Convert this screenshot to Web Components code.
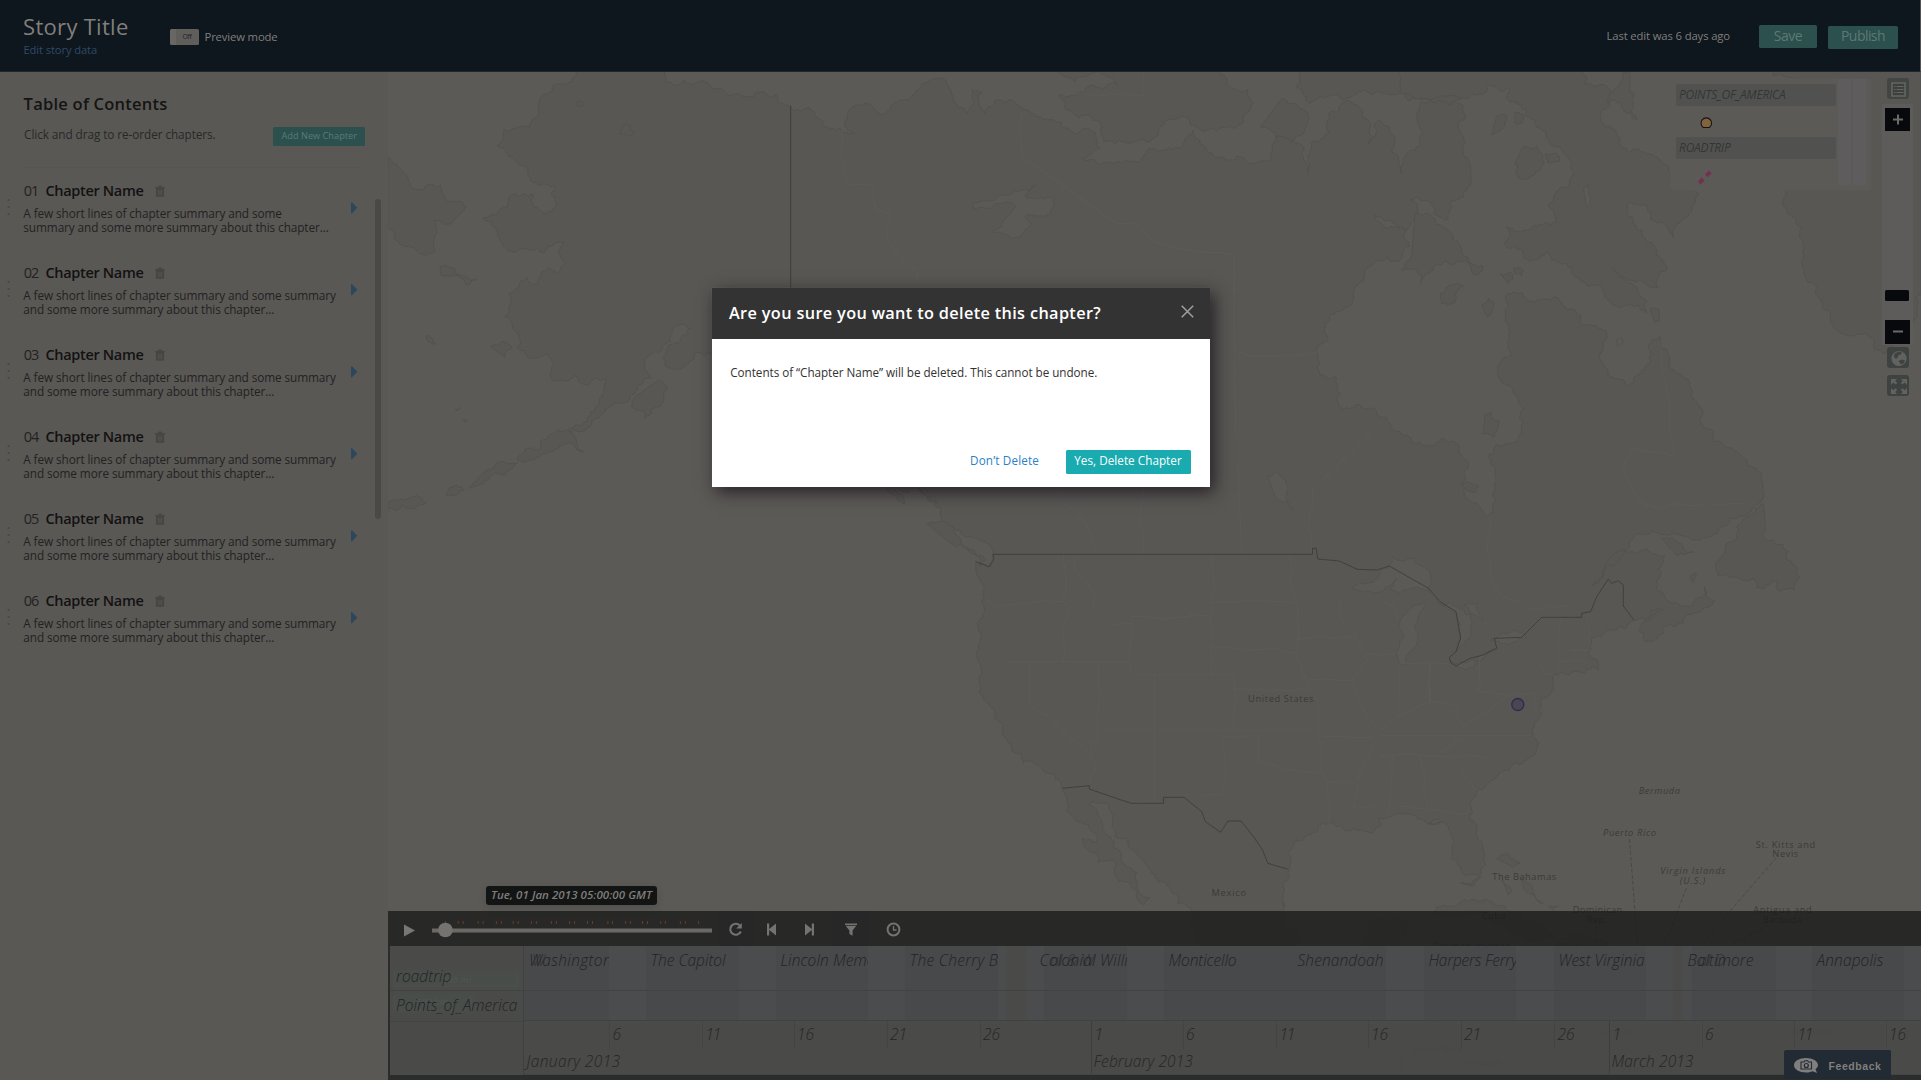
<!DOCTYPE html>
<html lang="en">
<head>
<meta charset="utf-8">
<title>Story Title</title>
<style>
html,body{margin:0;height:100%;overflow:hidden;background:#5a5855;font-family:"Open Sans","Noto Sans",sans-serif}
</style>
</head>
<body>
<story-editor></story-editor>
<script>
const define = (name, html, setup) => customElements.define(name, class extends HTMLElement {
  constructor() {
    super();
    this.attachShadow({mode: 'open'}).innerHTML = typeof html === 'function' ? html(this) : html;
  }
  connectedCallback() { if (setup) setup(this, this.shadowRoot); }
});

/* Basemap geometry: each sheet is [originX, originY, scaleX, scaleY] in page units. */
const SHEETS = {
  A: [380, 70, 2.8, 3], B: [900, 70, 2.8, 3], C: [1400, 70, 3, 2.8], D: [900, 460, 2.8, 3],
  E: [1380, 560, 3, 3], F: [1400, 780, 3, 3], G: [920, 900, 3, 3]
};
function points(text) {
  const out = []; let s;
  for (const tok of text.trim().split(/\s+/)) {
    if (SHEETS[tok]) { s = SHEETS[tok]; continue; }
    const [x, y] = tok.split(',').map(Number);
    out.push([s[0] + x / s[2], s[1] + y / s[3]]);
  }
  return out;
}
let seed = 7;
const rnd = () => (seed = (seed * 16807) % 2147483647) / 2147483647 - .5;
function rough(pts, amp) {
  const out = [];
  const split = (a, b) => {
    const dx = b[0] - a[0], dy = b[1] - a[1], d = Math.hypot(dx, dy);
    if (d < 3.2 || d > 90) { out.push(b); return; }
    const k = rnd() * amp, m = [(a[0] + b[0]) / 2 - dy * k, (a[1] + b[1]) / 2 + dx * k];
    split(a, m); split(m, b);
  };
  out.push(pts[0]);
  for (let i = 1; i < pts.length; i++) split(pts[i - 1], pts[i]);
  return out;
}
const path = (t, closed, amp) => 'M' + rough(points(t), amp).map(p => p[0].toFixed(1) + ' ' + p[1].toFixed(1)).join('L') + (closed ? 'Z' : '');

const LAND = [
`A 550,0 545,20 520,45 485,45 470,70 448,98 443,135 418,172 345,180 345,205 328,226 370,260 410,290 425,335 465,343 490,345 480,370 495,400 485,415 428,410 428,373 405,373 360,390 288,445 325,475 330,500 345,530 385,542 440,533 460,548 490,520 515,515 500,545 518,580 500,607 465,600 442,640 412,622 390,650 360,710 350,740 375,780 385,830 415,862 468,850 488,880 480,925 510,930 545,915 580,945 600,925 630,925 622,980 590,1025 530,1075 525,1090 560,1085 610,1045 665,1000 700,985 760,925 740,890 790,840 820,775 855,765 870,775 805,830 800,890 830,895 880,850 935,850 1300,1000 1420,1250 1450,1290 1470,1303 1465,1280 1440,1250 1520,1250 1540,1290 1560,1300
D 50,85 95,110 115,180 200,230 260,270 262,285 250,320 212,305 215,340 235,380 233,460 218,560 230,630 222,670 240,720 285,790 300,840 340,885 345,910 400,930 450,965 455,985 470,1030 500,1085 545,1120 550,1145 512,1135 520,1165 605,1210 612,1265 660,1290 683,1335 700,1315 665,1265 620,1185 590,1130 565,1105 530,1030 575,1030 600,1110 600,1130 660,1180 700,1230 760,1290 815,1350
G 820,35 825,100 840,137 1000,250 1300,300 1290,240 1150,160 1110,90 1090,30 1090,5
D 1075,1340 1073,1270 1092,1225 1085,1180 1110,1140 1175,1095 1210,1088 1270,1105 1330,1110 1345,1100 1340,1075 1380,1068 1440,1065 1490,1093 1515,1085
E 145,793 175,778 205,800 215,830 215,860 240,920 265,945 300,945 315,910 315,885 295,840 270,780 270,730 290,695 340,660 360,635 385,633 395,612 435,603 468,575 455,510 480,470 482,430 510,405 520,370 520,345 580,335 640,320 655,330 655,305 635,295 630,260 650,230 700,210 765,180 830,155 850,150 790,185 780,215 795,243 850,200 960,155 1005,125 975,80 940,130 870,125 845,95 830,60 840,30
C 770,1400 795,1360 740,1340 680,1350 610,1400 575,1445 620,1385 690,1330 700,1310 750,1298 935,1305 990,1255 1045,1245 1085,1205 1085,1140 1045,1110 1040,1090 940,1040 900,985 880,920 830,850 778,745 750,820 725,850 685,885 650,865 612,830 610,770 620,735 550,715 520,670 465,635 410,645 320,628 315,680 328,720 325,770 335,800 295,860 340,890 370,950 365,1005 330,1045 262,1080 285,1130 285,1210 260,1250 215,1210 180,1160 178,1055 80,1050 0,1012
B 1345,1040 1290,1008 1240,1022 1220,920 1175,915 1168,850 1190,760 1270,665 1300,620 1330,575 1400,570 1418,480 1380,472 1325,430 1395,470 1420,480 1450,405
C 30,360 75,365 145,420 150,370 212,320 210,260 188,220 190,100 65,88 70,180 5,290
B 1375,240 1370,170 1340,150 1330,200 1310,225 1310,150 1240,100 1200,130 1200,190 1140,260 1140,310 1130,230 1090,210 1050,200 1040,270 930,270 860,245 820,180 740,240 700,235 620,280 510,265 560,235 545,185 460,175 400,150 345,120 320,95 265,95 240,135 230,65 200,60 190,130 150,90 110,25 50,60 0,90
A 1400,130 1360,100 1310,125 1300,160 1330,190 1290,178 1240,155 1210,120 1150,108 1110,75 1070,65 1020,78 950,55 850,30 800,38 790,0`,
`B 430,0 460,20 520,20 540,8 600,30 610,45 540,45 445,75 465,120 500,145 560,155 570,215 630,215 700,215 790,135 850,185 940,175 970,130 975,60 910,20 890,0`,
`B 1070,85 1130,120 1140,170 1100,215 1010,170`,
`B 1120,0 1110,50 1150,100 1240,90 1300,60 1400,70 1460,90 1568,90 1568,0`,
`C 545,0 555,40 620,45 610,110 660,190 740,235 800,265 850,330 895,345 860,410 820,470 750,420 740,380 690,370 700,430 740,480 770,520 800,560 775,610 700,590 640,555 740,650 740,680 620,640 540,590 480,540 440,510 370,520 315,490 320,440 400,435 470,425 445,380 500,330 515,300 490,230 440,190 380,130 330,90 325,50 270,40 200,80 100,80 0,60 0,0`,
`C 690,0 660,40 620,90 690,120 711,140 700,90 690,60`,
`C 1120,0 1120,15 1180,25 1155,340 1150,380 1200,470 1205,530 1245,600 1290,680 1345,745 1410,750 1455,795 1500,760 1540,700 1545,640 1563,610 1563,0`,
`C 1090,1215 1050,1250 1010,1310 955,1415 1060,1420 1070,1450 1130,1430 1140,1460 1185,1455 1188,1390 1160,1370 1150,1330 1090,1310 1095,1260`,
`C 370,215 410,212 425,235 420,280 390,302 355,300 345,260`,
`C 435,235 470,232 480,255 445,260`, `C 345,120 370,125 365,150 345,148`, `C 290,130 315,125 300,170 275,180`,
`C 45,400 95,410 150,455 205,525 250,550 225,572 135,535 100,560 60,598 50,560 5,560 35,520`,
`C 120,625 150,600 190,605 170,640 125,655`, `C 245,660 265,640 280,660 262,692`, `C 300,570 330,565 340,585 325,597`,
`C 340,555 370,562 365,578 345,570`, `C 785,1310 830,1320 880,1350 860,1355 810,1340`, `C 750,670 775,670 780,700 765,708`,
`C 255,965 275,960 300,985 280,1030 250,1020`, `C 870,1420 890,1410 880,1435`, `C 187,1160 210,1155 235,1165 225,1182 200,1178`,
`A 22,260 60,300 80,330 170,345 240,410 190,462 150,450 160,490 155,540 130,557 105,545 50,515 22,465`,
`A 168,590 210,595 270,625 240,645 200,618 170,615`, `A 310,830 340,815 370,835 350,862`,
`A 780,930 805,955 790,1000 740,1045 710,1015 715,980`,
`A 385,1170 400,1150 470,1100 520,1080 570,1145 540,1120 500,1135 440,1160 400,1175`,
`A 250,1255 280,1220 385,1180 350,1215 290,1240`, `A 22,1305 90,1280 130,1298 60,1305 22,1318`, `A 185,1275 230,1250 235,1262 190,1278`,
`A 128,798 155,822 135,815`, `A 210,1018 225,1013 215,1022`, `A 232,1050 245,1050 238,1056`,
`D 75,190 115,185 170,240 240,300 225,318 130,240`,
`F 100,400 130,375 220,358 290,375 380,430 460,468 380,475 320,440 250,400 130,410`,
`F 470,490 560,470 630,490 640,530 480,525`, `F 290,235 320,220 360,250 340,262`, `F 305,290 335,330 325,345`, `F 360,290 400,330 430,370 405,345 370,320`,
`F 445,380 475,378 460,390`, `F 180,310 245,290 220,318`,
`G 1330,137 1350,65 1420,55 1465,60 1460,100 1430,200 1325,250`,
`A 680,165 700,165 712,187 700,198 670,190`, `A 550,95 565,95 568,107 552,108`,
`F 0,820 180,860 230,850 360,870 500,840 560,860 700,900 0,900`
];
const WATER = [
`B 205,400 300,375 380,345 350,380 430,385 420,430 350,440 370,465 320,505 260,485 300,440 325,410 270,400 205,415`,
`D 1030,50 1050,35 1080,60 1080,110 1100,150 1050,110`,
`D 1265,385 1370,320 1380,290 1480,330 1490,370 1480,395 1400,400 1370,390 1390,355 1300,395`,
`D 1440,435 1470,430 1440,500 1437,570 1410,615 1390,580 1400,480`,
`E 170,125 215,130 310,180 290,130 250,135 270,200 240,262 228,275 240,230 225,160`,
`E 208,300 228,312 340,265 350,270 310,295 240,325`,
`E 330,240 370,220 430,222 440,235 360,245`,
`C 550,330 565,320 570,370 560,385`, `C 650,755 665,750 668,765 652,775`
];
const BORDERS = [
`D 212,305 250,320 262,300 260,283 1155,283 1155,265 1165,265 1170,297 1230,303 1280,328 1335,330 1370,318 1480,385 E 145,85 180,125 228,155 242,235 228,275 208,292 212,308 228,318 270,295 310,285 350,265 343,235 425,232 485,172 605,172 605,160 632,155 650,110 685,57 695,70 715,62 730,75 730,138 762,180`,
`D 455,985 530,977 530,987 647,1030 738,1030 738,1012 795,1012 845,1055 855,1085 898,1117 918,1083 955,1083 990,1130 1015,1170 1030,1210 1085,1227`,
`A 1150,108 1150,780`
];
const STATES = [
`D 458,283 458,425 270,445 240,415`, `D 458,425 475,440 455,500 458,605`, `D 300,605 645,605`, `D 362,605 362,735 535,890 550,915 530,975`,
`D 553,605 553,840 535,850 535,890`, `D 648,470 648,645 935,645 935,810`, `D 648,470 872,470 872,283`, `D 872,430 1105,430`, `D 872,470 872,645`,
`D 872,560 1050,565 1110,580 1145,690 1170,720`, `D 935,688 1150,688`, `D 712,645 712,1030`, `D 560,810 1170,810`, `D 903,828 903,1003 790,1003`,
`D 903,828 1002,828 1002,905 1080,930 1190,945 1205,1040 1200,1090`, `D 1090,283 1112,440 1112,580`, `D 1112,538 1280,538`, `D 1140,660 1265,662 1310,600 1280,535 1230,470 1230,420`,
`D 1170,720 1172,830 1180,935`, `D 1172,828 1320,828 1330,850 1285,940 1270,1040 1330,1040`, `D 1192,965 1280,965`, `D 1265,662 1310,770 1345,810 1385,775 1485,725 1560,740`,
`D 1395,612 1395,775`, `D 1485,612 1485,725`, `D 1300,580 1390,580`, `D 1300,395 1385,440 1395,480`, `D 488,283 490,330 545,400 540,440 590,495 645,490`,
`D 440,100 530,210 550,283`, `D 682,60 682,283`, `D 945,0 957,283`, `D 1155,283 1155,90 1345,-110`,
`E 0,527 455,527`, `E 0,590 200,590 270,585 330,600 365,635`, `E 38,590 25,765`, `E 122,590 145,750 55,740`, `E 145,750 265,760 265,740`, `E 200,590 285,690`,
`E 60,312 205,312`, `E 150,312 150,430`, `E 298,290 298,397 460,397 465,450 485,450`, `E 298,380 225,455 250,500 330,450 380,410`, `E 170,585 260,527`,
`E 480,305 490,340 520,345`, `E 545,172 535,335`, `E 570,270 630,270`, `E 535,302 620,302`, `E 620,165 630,260`,
`C 272,1250 272,1430 310,1475 400,1510 500,1500`, `C 778,760 810,920 820,1080 700,1060 670,1110 720,1210 790,1230 820,1215 1035,1215`,
`B 342,120 342,260 605,460 660,460 705,512 935,555 940,1100`, `B 682,0 682,78 460,78`, `B 935,845 1168,845`, `A 1295,180 1305,340 1380,345 1390,420 1430,430 1420,510 1500,600 1510,640`
];
const LABELS = [
['United States',1248,701.7,65.5],['Mexico',1211.5,895.5,34.5],['Bermuda',1638.7,794,41.3,1],['Puerto Rico',1603,835.7,53,1],
['St. Kitts and',1755.7,847.7,59.6],['Nevis',1772.3,856.6,26],['Virgin Islands',1660.3,874,65,1],['(U.S.)',1679.7,884,25.6,1],
['The Bahamas',1492.3,880,64],['Dominican',1572.7,913.3,49.6],['Rep.',1587,923,20],['Cuba',1481.7,918.7,24],['Antigua and',1753.3,913.3,58.4],
['Barbuda',1762.7,923,39],['Cayman Islands',1433,948.5,76,1],['Haiti',1560,950,22.7],['Belize',1372,972,28],['Guatemala',1340.7,990,52],
['Honduras',1386,998.5,40],['El Salvador',1356.7,1010,55],['Nicaragua',1403,1020.7,48.7],['Costa Rica',1412.7,1051.7,49],['Panama',1462.7,1065,37.3],
['Aruba',1584.3,1018,26.7,1],['Curaçao',1595,1035,39],['St. Vincent',1604,987,53],['and the Grenadines',1583,996.7,94],['Dominica',1754,965,43.7],
['St. Lucia',1814,985.7,40],['Barbados',1868,1015.7,44],['Grenada',1792,1035,40],['Jamaica',1500,961.5,34],['Venezuela',1620.7,1072,52]
];

define('base-map', () => `<style>:host{display:block;width:1533px;height:1008px}svg{display:block}
text{font:500 9.3px "Open Sans",sans-serif;fill:#3b3a38}text.i{font-style:italic}</style>
<svg width="1533" height="1008" viewBox="388 72 1533 1008">
<rect x="388" y="72" width="1533" height="1008" fill="#5c5a57"/>
<g fill="#595754" stroke="#51504d" stroke-width=".8" stroke-linejoin="round">${LAND.map(t => `<path d="${path(t, true, .5)}"/>`).join('')}</g>
<g fill="#5c5a57" stroke="#52504e" stroke-width=".7">${WATER.map(t => `<path d="${path(t, true, .4)}"/>`).join('')}</g>
<g fill="none" stroke="#5e5c5a" stroke-width=".8">${STATES.map(t => `<path d="${path(t, false, .12)}"/>`).join('')}</g>
<g fill="none" stroke="#3d3c3a" stroke-width=".9">${BORDERS.map(t => `<path d="${path(t, false, 0)}"/>`).join('')}</g>
<g fill="none" stroke="#454442" stroke-width=".8" stroke-dasharray="4 2">
<path d="M1629.5 839L1637.5 946"/><path d="M1686.5 888L1664 946"/><path d="M1776 858L1700 946"/><path d="M1768 925L1730 946"/><path d="M1596.5 926V944"/></g>
${LABELS.map(l => `<text x="${l[1]}" y="${l[2]}" textLength="${l[3]}"${l[4] ? ' class="i"' : ''}>${l[0]}</text>`).join('')}
<circle cx="1517.8" cy="704.5" r="6" fill="#4c4653" stroke="#2b3050" stroke-width="1.4"/>
</svg>`);

define('app-button', `<style>:host{display:flex;align-items:center;justify-content:center;box-sizing:border-box;border-radius:1.5px;background:#2b504d;color:#5d7975}</style><slot></slot>`);

define('app-header', `<style>
:host{display:flex;height:72px;box-sizing:border-box;background:#0e161e;border-bottom:1px solid #20282f;color:#817f7b;border-right:1px solid #55534f}
.brand{width:147px;padding:13px 0 0 22.5px}
.title{font-size:22px;line-height:26px;padding-left:.6px}
.edit{font-size:11.2px;line-height:14px;margin-top:4px;color:#2e4b65;font-weight:500;padding-left:1px}
.toggle{width:29px;height:16px;margin:29px 6px 0 0;border-radius:1.5px;background:linear-gradient(90deg,#696764 6px,#5f5e5b 0);color:#242424;display:flex;justify-content:flex-end;box-sizing:border-box;padding-right:7px;font-size:7px;line-height:16px}
.mode{font-size:11.3px;line-height:14px;padding-top:29.5px}
.actions{margin-left:auto;display:flex;font-size:14px}
.last{font-size:11.3px;line-height:14px;padding:28.5px 29px 0 0}
app-button{height:23px;line-height:20px}
.save{width:58px;margin:25px 11px 0 0;padding-bottom:1px}.pub{width:70px;margin:26px 22px 0 0;padding-bottom:3px}
</style>
<div class="brand"><fit-text class="title" w="105.5">Story Title</fit-text><fit-text class="edit" w="73.5">Edit story data</fit-text></div>
<div class="toggle"><fit-text w="9">Off</fit-text></div><fit-text class="mode" w="73">Preview mode</fit-text>
<div class="actions"><fit-text class="last" w="123.5">Last edit was 6 days ago</fit-text>
<app-button class="save"><fit-text w="28.5">Save</fit-text></app-button><app-button class="pub"><fit-text w="44">Publish</fit-text></app-button></div>`);

define('chapter-item', el => `<style>
:host{display:block;height:82px;position:relative}
.top{display:flex;font-size:14.5px;line-height:20px;color:#161616}
.n{width:21.7px;padding-left:.5px;color:#222}.name{width:109.5px;font-weight:600;color:#121212}
.trash{margin-top:4px}
.body{display:flex;margin-top:5px;color:#222;font-size:11.8px;line-height:14px}
.txt{width:327.5px}
.arrow{margin-top:-4px}
.dots{position:absolute;left:-16px;top:17px}
</style>
<svg class="dots" width="4" height="18"><g fill="#484745"><circle cx="1.6" cy="2" r="1.1"/><circle cx="1.6" cy="9" r="1.1"/><circle cx="1.6" cy="16" r="1.1"/></g></svg>
<div class="top"><fit-text class="n" w="14.5">${el.getAttribute('no')}</fit-text><fit-text class="name" w="98"><slot></slot></fit-text>
<svg class="trash" width="10" height="12" viewBox="0 0 10 12"><path d="M0 2h2.6L3.8.4h2.4L7.4 2H10v1.3H0zM.9 3.3h8.2V11q0 .8-.8.8H1.7q-.8 0-.8-.8z" fill="#474644"/><path d="M3.4 5v5M5 5v5M6.6 5v5" stroke="#5a5855" stroke-width=".7"/></svg></div>
<div class="body"><div class="txt">${el.hasAttribute('first')
 ? '<fit-text w="258.5">A few short lines of chapter summary and some</fit-text><fit-text w="305.5">summary and some more summary about this chapter...</fit-text>'
 : '<fit-text w="312.5">A few short lines of chapter summary and some summary</fit-text><fit-text w="251">and some more summary about this chapter...</fit-text>'}</div>
<svg class="arrow" width="7" height="12"><path d="M0 .3L1 .3 6.3 5.8 1 11.3H0z" fill="#2c465c"/></svg></div>`);

define('table-of-contents', `<style>
:host{display:flex;width:388px;box-sizing:border-box;background:#5a5855;padding-left:23.3px}
.col{width:351.7px}
h1{margin:0;padding-top:19px;padding-left:.3px;font-size:16.5px;line-height:26px;font-weight:600;color:#141414}
.row{display:flex;justify-content:space-between;width:342.2px;height:21px;margin-top:10px;color:#282828;font-size:11.8px;line-height:22px;padding-left:.8px;box-sizing:border-box}
app-button{width:92.5px;height:18.5px;font-size:9.2px;color:#577d78;line-height:16px}
.row fit-text.hint{margin-top:-4px}
.list{margin-top:19px;border-top:1px solid #575552;width:338px;padding-top:13.4px}
.bar{width:6px;height:320px;margin-top:127px;border-radius:3px;background:#4a4947}
</style>
<div class="col"><h1><fit-text w="144">Table of Contents</fit-text></h1>
<div class="row"><fit-text class="hint" w="191.5">Click and drag to re-order chapters.</fit-text><app-button><fit-text w="75.5">Add New Chapter</fit-text></app-button></div>
<div class="list">
<chapter-item no="01" first>Chapter Name</chapter-item><chapter-item no="02">Chapter Name</chapter-item><chapter-item no="03">Chapter Name</chapter-item>
<chapter-item no="04">Chapter Name</chapter-item><chapter-item no="05">Chapter Name</chapter-item><chapter-item no="06">Chapter Name</chapter-item></div></div>
<div class="bar"></div>`);

define('map-legend', `<style>
:host{display:flex;width:200px;height:111px;background:#5c5a57;border-radius:3px;box-shadow:0 0 2px #5f5d5a;box-sizing:border-box;padding-left:5px}
.l{width:160px;padding-top:5px;font-size:12px;font-style:italic;color:#343634;margin-right:2px}
.h{height:22px;background:#51524f;border-radius:2px;line-height:21px;padding-left:3px;box-sizing:border-box}
svg{display:block}
.c{height:106px;background:#5e5c5c;margin-right:1.5px}
</style><div class="l"><div class="h"><fit-text w="106.5">POINTS_OF_AMERICA</fit-text></div>
<svg width="160" height="31"><path d="M27.3 21.5a5.3 5.3 0 1 1 6 0z" fill="#83633d" stroke="#151413" stroke-width="1.1"/></svg>
<div class="h"><fit-text w="51.5">ROADTRIP</fit-text></div>
<svg width="160" height="30"><path d="M23.2 24l4-4M30.3 16.8l4-4" stroke="#74304e" stroke-width="4"/></svg></div>
<div class="c" style="width:13px"></div><div class="c" style="width:13px"></div>`);

define('map-controls', `<style>
:host{display:flex;flex-direction:column;align-items:center;width:31px}
svg{display:block}
.strip{display:flex;flex-direction:column;width:31px;height:241px;background:#5e5c5a;margin:5px 0 2px;box-sizing:border-box;padding:4px 3px 0}
.gap{flex:none}
</style>
<svg width="22" height="21"><rect width="22" height="21" rx="3" fill="#414543"/><path d="M5 5h13v13H5z" fill="#3c403e" stroke="#656662" stroke-width="1.6"/><path d="M7 8.5h1.5M9.5 8.5h7M7 11.5h1.5M9.5 11.5h7M7 14.5h1.5M9.5 14.5h7" stroke="#656662" stroke-width="1"/></svg>
<div class="strip">
<svg width="25" height="23"><rect width="25" height="23" fill="#08090d"/><path d="M8 11.5h10M13 6.5v10" stroke="#6b6a69" stroke-width="2"/></svg>
<svg class="gap" width="24" height="11" style="margin-top:159px"><rect width="24" height="11" rx="1.5" fill="#08090d"/></svg>
<svg class="gap" width="25" height="24" style="margin-top:19px"><rect width="25" height="24" fill="#08090d"/><path d="M8 11.5h10" stroke="#6b6a69" stroke-width="2"/></svg></div>
<svg width="22" height="21"><rect width="22" height="21" rx="3" fill="#3e4341"/><circle cx="12" cy="11.5" r="7.6" fill="#62635f"/><path d="M7.5 6.5l4.5-2 3 1-1 2-2.5.5-.5 2-2 2-2-2zM11.5 14l3.5-1.5 3 1-1.5 3-2.5 1z" fill="#3e4341"/></svg>
<svg width="22" height="21" style="margin-top:7px"><rect width="22" height="21" rx="3" fill="#3e4341"/><path d="M4 4h6L8.2 5.8l2 2.2-1.6 1.5-2.2-2L4 10zM20 4v6l-2.4-2.5-2.2 2L13.8 8l2-2.2L14 4zM4 19v-6l2.4 2.3 2.2-2 1.6 1.5-2 2.2L10 19zM20 19h-6l1.8-2-2-2.2 1.6-1.5 2.2 2L20 13z" fill="#62635f"/></svg>`);

define('time-player', () => {
  const t = [219,233,275,289,326,340,373,387,424,438,480,494,531,545,581,595,638,651,688,701,735,749,786,799,841,855,892];
  return `<style>
:host{display:flex;height:35px;background:rgba(21,23,22,.73);color:#747370;padding-left:16px;align-items:center}
svg{display:block}.btn{display:flex;justify-content:center;align-items:center;width:37px;height:35px;box-sizing:border-box;padding-top:2px}
.on{background:rgba(34,37,36,.35)}</style>
<svg width="12" height="13" style="margin-top:3px"><path d="M0 .5L11 6.5 0 12.5z" fill="#787774"/></svg>
<svg width="286" height="35" style="margin:0 4px 0 11px"><rect x="5" y="17.5" width="280" height="4.5" fill="#6a6966"/><path d="M5 21.5h280" stroke="#4a4a47" />
<g stroke="#6e3b22">${t.map(v => `<path d="M${(v / 2.8 - 47).toFixed(1)} 10v3"/>`).join('')}<path d="M18.4 10v2"/></g><circle cx="18.4" cy="19" r="7.3" fill="#747370"/></svg>
<div class="btn on" style="width:37px"><svg width="15" height="15"><path d="M11.8 3.5A5.5 5.5 0 1 0 12.8 9.5" fill="none" stroke="#747370" stroke-width="2.1"/><path d="M13.8 1v5.6H8.2z" fill="#747370"/></svg></div>
<div class="btn" style="width:34px"><svg width="9" height="13"><path d="M0 .5h2.2V6L9 .5v12L2.2 7v5.5H0z" fill="#747370"/></svg></div>
<div class="btn" style="width:42px"><svg width="9" height="13"><path d="M9 .5H6.8V6L0 .5v12L6.8 7v5.5H9z" fill="#747370"/></svg></div>
<div class="btn on" style="margin-left:2px"><svg width="12" height="13"><path d="M0 .5h12v1.6H0zM.6 2.7h10.8L7.6 7.5v5.3L4.4 11V7.5z" fill="#747370"/></svg></div>
<div class="btn" style="margin-left:5.5px"><svg width="15" height="15"><circle cx="7.5" cy="7.5" r="5.9" fill="none" stroke="#747370" stroke-width="2"/><path d="M7.5 4v4h3" fill="none" stroke="#747370" stroke-width="1.3"/></svg></div>`;
});

define('story-timeline', () => {
  /* [width, trailing gap width, label, fitted width, head tint px, overprinted text] */
  const ev = [
    [85,36.5,'Washington',83,0,'W'],[93,37,'The Capitol',75,0],[92.5,36.5,'Lincoln Memorial',117,0],[93,37,'The Cherry Blossoms',145,0],
    [92,37,'Colonial Williamsburg',150,9,'al & W'],[129,0,'Monticello',68,0],[93,38,'Shenandoah',86,0],[92,38,'Harpers Ferry',89,0],[92,37,'West Virginia',86,0],
    [93,36,'Baltimore',66,9,'al D'],[92,18,'Annapolis',67,0]];
  const days = [[85,'1',-5],[93,'6'],[91.5,'11'],[93,'16'],[93,'21'],[111.5,'26'],[91.5,'1'],[93.5,'6'],[91.5,'11'],[93,'16'],[93.5,'21'],[55,'26'],[92.5,'1'],[92.5,'6'],[91.5,'11'],[36,'16']];
  const fw = s => s === '11' ? 14.5 : s.length > 1 ? 17 : s === '1' ? 6 : 8;
  const light = '#4a4c4e';
  const shade = i => i === 3 ? `linear-gradient(90deg,${light} 8px,transparent 8px 29px,${light} 0)` : i === 8 ? `linear-gradient(90deg,${light} 27px,transparent 0)` : light;
  return `<style>
:host{display:flex;height:134px;box-sizing:border-box;border-left:2px solid #2b2d2d;border-bottom:5px solid #2b2d2c;background:rgba(73,73,72,.92);font-size:15.5px;font-weight:300;font-style:italic;color:#222326}
.names{width:134px;flex:none;border-right:1px solid #3f4040;box-sizing:border-box;position:relative}
.names div{box-sizing:border-box;padding-left:6px;border-bottom:1px solid #424343}
.sc{position:absolute;left:2px;top:24px}
.names fit-text{position:relative}
.grid{flex:1;overflow:hidden;display:flex;flex-direction:column}
.bands{height:75px;display:flex;border-bottom:1px solid #404143;box-sizing:border-box;position:relative}
.e{flex:none;overflow:hidden;position:relative;box-sizing:border-box;padding-left:5px;line-height:22px;padding-top:3px;background:linear-gradient(90deg,${light} var(--h),#48494b 0)}
.g{flex:none}
.over{position:absolute;left:16px;top:3px;opacity:.6}
.over.w{left:8px}
.e,.g{height:74px}
.bands:after{content:"";position:absolute;left:0;right:0;top:44px;border-top:1px solid #414245}
.days,.months{display:flex;height:29px}
.days div,.months div{flex:none;box-sizing:border-box;padding-left:2.5px;line-height:27px;color:#252626}
.days div{border-left:1px solid #444443;height:28px}
.days div.m,.months div{border-left:1px solid #3d3e3f;height:29px}
.months{height:25px;border-bottom:1px solid #444443;box-sizing:border-box}
.months div{line-height:22px;height:24px;padding-left:1.5px}
</style>
<div class="names"><svg class="sc" width="130" height="44"><rect width="128" height="19" rx="2" fill="#484d4a"/><path d="M3 2v14h122V2" fill="none" stroke="#50514f"/><rect y="24" width="82" height="19" rx="2" fill="#484d4a"/><path d="M3 26v14h76V26" fill="none" stroke="#50514f"/><text x="50" y="13" font-size="9.5" font-weight="700" fill="#4f524f">500 mi</text><text x="24" y="35" font-size="9.5" font-weight="700" fill="#4f524f">500 km</text></svg>
<div style="height:45px;line-height:20px;padding-top:20px"><fit-text w="55.5">roadtrip</fit-text></div><div style="height:31px;line-height:29px"><fit-text w="121.5">Points_of_America</fit-text></div></div>
<div class="grid"><div class="bands">${ev.map((e, i) => `<div class="e" style="width:${e[0]}px;--h:${e[4]}px"><fit-text w="${e[3]}">${e[2]}</fit-text>${e[5] ? `<span class="over${i ? '' : ' w'}">${e[5]}</span>` : ''}</div><div class="g" style="width:${e[1]}px;background:${shade(i)}"></div>`).join('')}</div>
<div class="days">${days.map((d, i) => `<div class="${i == 6 || i == 12 ? 'm' : ''}" style="width:${d[0]}px;${d[2] ? 'padding-left:0;overflow:hidden;text-indent:-4px;border:0' : ''}"><fit-text w="${d[2] ? 4 : fw(d[1])}">${d[1]}</fit-text></div>`).join('')}</div>
<div class="months"><div style="width:566.5px;padding-left:2.5px;border:0"><fit-text w="94">January 2013</fit-text></div><div style="width:518px;padding-left:2px"><fit-text w="99.5">February 2013</fit-text></div><div style="padding-left:2px"><fit-text w="82">March 2013</fit-text></div></div></div>`;
});

define('time-tip', `<style>:host{display:block;width:171px;height:19px;border-radius:3px;background:#131414;color:#807e7b;font-size:11.5px;font-weight:600;font-style:italic;line-height:17.5px;padding-left:5px;box-sizing:border-box;box-shadow:0 3px 8px rgba(0,0,0,.12)}</style><slot></slot>`);

define('feedback-tab', `<style>:host{display:flex;width:107px;height:29px;box-sizing:border-box;padding:7.5px 0 0 10px;background:#222a33;border-radius:2px 2px 0 0;color:#807f7e;font:700 10.5px "Liberation Sans",sans-serif}
fit-text{margin:2px 0 0 10.5px;line-height:12px}</style>
<svg width="24" height="16"><path d="M12 0C5.5 0 0 3 0 7.2s5.5 7.2 12 7.2c2.5 0 4.5-.3 6.5-1.2L23 15l-1.5-4C23 10 24 8.6 24 7.2 24 3 18.5 0 12 0z" fill="#807f7e"/><path d="M7 4h3l.8-1.2h2.8L14.4 4H17.5v7H7z" fill="none" stroke="#222a33" stroke-width="1.1"/><circle cx="12.3" cy="7.5" r="2" fill="none" stroke="#222a33" stroke-width="1.2"/></svg><fit-text w="53">Feedback</fit-text>`);

define('map-workspace', `<style>
:host{display:flex;flex-direction:column;flex:1;position:relative;overflow:hidden}
base-map{position:absolute;left:0;top:0}
.space{flex:1}
time-player,story-timeline{position:relative}
map-legend{position:absolute;left:1283px;top:7px}
map-controls{position:absolute;left:1494px;top:6px}
time-tip{position:absolute;left:98px;top:814px}
feedback-tab{position:absolute;left:1396px;bottom:1px}
</style><base-map></base-map><div class="space"></div><time-player></time-player><story-timeline></story-timeline>
<map-legend></map-legend><map-controls></map-controls><time-tip><fit-text w="161">Tue, 01 Jan 2013 05:00:00 GMT</fit-text></time-tip><feedback-tab></feedback-tab>`);

define('confirm-dialog', `<style>
:host{display:flex;flex-direction:column;width:498px;height:199px;box-sizing:border-box;background:#fff;box-shadow:4px 5px 16px rgba(20,12,20,.75),0 0 1px #777}
.h{display:flex;justify-content:space-between;height:51px;background:#333;color:#fff;padding:0 16px 0 17px;font-size:16.3px;font-weight:600;line-height:50px}
.h svg{margin-top:17px}
.b{flex:1;padding:25px 18.3px 0;color:#333131;font-weight:500;font-size:11.7px;line-height:16px}
.f{display:flex;justify-content:flex-end;height:37px;padding-right:19.5px;font-size:11.7px;font-weight:500;line-height:21.5px;color:#2b7fc6}
app-button{width:125px;height:24px;margin-left:26.5px;background:#19abb0;color:#fff;align-items:flex-start}
</style><div class="h"><fit-text w="372"><slot name="title"></slot></fit-text><svg width="13" height="13"><path d="M.7.7l11.5 11.6M12.2.7L.7 12.3" stroke="#a0a0a0" stroke-width="1.5"/></svg></div>
<div class="b"><fit-text w="367"><slot></slot></fit-text></div>
<div class="f"><fit-text w="69">Don’t Delete</fit-text><app-button><fit-text w="107.5">Yes, Delete Chapter</fit-text></app-button></div>`);

define('story-editor', `<style>
:host{display:flex;flex-direction:column;width:1921px;height:1080px;overflow:hidden;position:relative}
.main{display:flex;flex:1;min-height:0}
confirm-dialog{position:absolute;left:712px;top:288px}
</style><app-header></app-header><div class="main"><table-of-contents></table-of-contents><map-workspace></map-workspace></div>
<confirm-dialog><span slot="title">Are you sure you want to delete this chapter?</span>Contents of “Chapter Name” will be deleted. This cannot be undone.</confirm-dialog>`);

/* Single-line text tracked so that its run is exactly w pixels wide. */
define('fit-text', `<style>:host{display:block;white-space:nowrap}span{display:inline-block}</style><span><slot></slot></span>`, (el, root) => {
  const s = root.querySelector('span'), w = +el.getAttribute('w');
  const flat = n => n.nodeName === 'SLOT' ? n.assignedNodes({flatten: true}).map(flat).join('') : n.nodeType === 3 ? n.data : [...n.childNodes].map(flat).join('');
  const n = [...el.childNodes].map(flat).join('').trim().length || 1;
  const nat = s.getBoundingClientRect().width;
  if (w && nat) s.style.letterSpacing = ((w - nat) / n).toFixed(3) + 'px';
});
</script>
</body>
</html>
